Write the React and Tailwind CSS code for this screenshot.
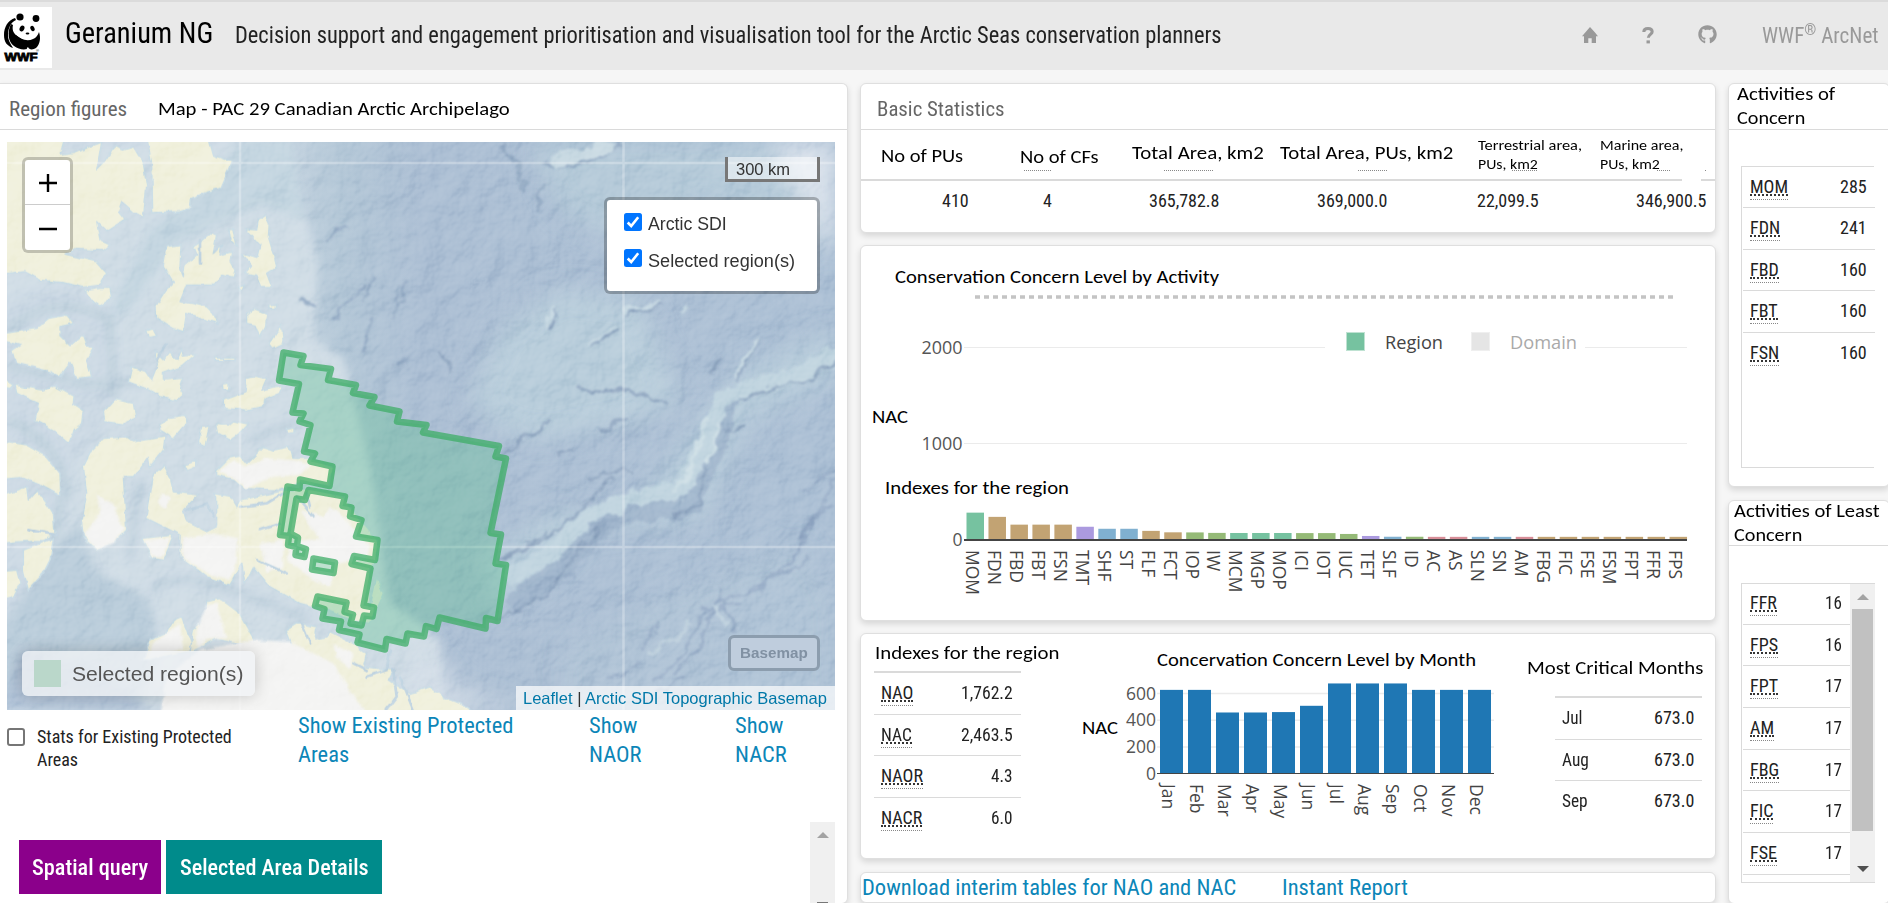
import React, { useLayoutEffect, useRef, useState } from 'react';
import { FaGithub } from 'react-icons/fa';

const CONDENSED = "font-['Roboto_Condensed','Roboto',sans-serif]";
const HUMANIST = "font-['Carlito','Lato',sans-serif]";
const ARIAL = "font-['Liberation_Sans',sans-serif]";

/* One line of text, squeezed horizontally to a given width. */
function Fit({ w, className = '', children }) {
  const ref = useRef(null);
  const [scale, setScale] = useState(1);
  useLayoutEffect(() => {
    setScale(w / ref.current.offsetWidth);
  }, [w]);
  return (
    <span className={'block shrink-0 ' + className} style={{ width: w }}>
      <span ref={ref} className="inline-block origin-left whitespace-nowrap align-top" style={{ transform: `scaleX(${scale})` }}>
        {children}
      </span>
    </span>
  );
}

function Card({ className = '', children }) {
  return (
    <section className={'shrink-0 rounded-md border border-[#dfdfdf] bg-white shadow-[0_3px_6px_rgba(0,0,0,0.13)] ' + className}>
      {children}
    </section>
  );
}

function Panda() {
  return (
    <svg viewBox="0 0 52 61" className="h-[61px] w-[52px]">
      <g fill="#000">
        <circle cx="20" cy="10" r="3.6" />
        <circle cx="36" cy="11.5" r="3.4" />
        <path d="M15 11C8 13 4 20 4 28c0 7 3 11 9 13-2-4-5-7-5-13 0-7 3-13 8-15z" />
        <path d="M11 17c-4 8-3 18 3 22 4 3 9 4 13 3l-2-8-8-5c-4-3-5-7-4-11z" />
        <ellipse cx="22" cy="21.5" rx="2.3" ry="3.1" transform="rotate(25 22 21.5)" />
        <ellipse cx="32.5" cy="21.5" rx="2" ry="2.8" transform="rotate(-25 32.5 21.5)" />
        <ellipse cx="27.500" cy="26.500" rx="1.9" ry="1.1" />
        <path d="M16 28c4 4 11 7 17 4 3-1 5-4 6-7 2 6 1 12-3 16-3 2-7 2-8-1-2 3-9 2-11-1-2-4-3-8-1-11z" />
      </g>
      <text x="4.500" y="54" fontSize="11" fontWeight="900" fontFamily="Liberation Sans, sans-serif" textLength="33" lengthAdjust="spacingAndGlyphs" stroke="#000" strokeWidth="0.800">WWF</text>
      <text x="36" y="45" fontSize="4" fontFamily="Liberation Sans, sans-serif">®</text>
    </svg>
  );
}

function Header() {
  return (
    <header className={'flex h-[70px] shrink-0 items-start border-t-2 border-[#dbdbdb] bg-[#e9e9e9] ' + CONDENSED}>
      <div className="mt-[5px] h-[61px] w-[52px] bg-white"><Panda /></div>
      <Fit w={148} className="ml-[13px] mt-[10px] text-[29px] leading-[42px] text-black">Geranium NG</Fit>
      <Fit w={987} className="ml-[22px] mt-[12px] text-[23.500px] leading-[42px] text-[#222]">Decision support and engagement prioritisation and visualisation tool for the Arctic Seas conservation planners</Fit>
      <svg viewBox="0 0 16 16" className="ml-[360px] mt-[25px] h-[16px] w-[16px] shrink-0 fill-[#999]">
        <path d="M8 0L0 9.2h2V16h4.3v-4.8h3.4V16H14V9.2h2L13 5.6z" />
      </svg>
      <svg viewBox="0 0 12 17" className="ml-[44px] mt-[25px] h-[17px] w-[12px] shrink-0 fill-none stroke-[#999]">
        <path d="M1.8 5C1.8 2.8 3.4 1.6 6 1.6s4.2 1.2 4.2 3.2c0 2.6-3.9 2.7-3.9 6" strokeWidth="3" />
        <path d="M4.5 14.9h3.4" strokeWidth="3" />
      </svg>
      <FaGithub className="ml-[44px] mt-[23px] size-[19px] shrink-0 text-[#999]" />
      <Fit w={117} className="ml-[45px] mt-[13px] text-[22px] leading-[42px] text-[#999]">WWF<sup className="-top-[8px] text-[16px]">®</sup> ArcNet</Fit>
    </header>
  );
}

const REGION =
  'M283.5 352.5L303.5 356L300.5 365L331 369L328 380L356 385L353 393L374.5 397L369.5 405.5L399.5 411.5L397 421.5L426.5 425L423 432.5L499 446L495.5 456.5L506 458.5L490.5 533L501 534.5L495.5 563.5L506 565L497.5 621L486 618L485.5 628.5L439.5 617.5L436.5 629L426 626L424 636.5L407.5 633.5L405.5 643.5L386.5 639L385 649.5L357.5 642.5L359.5 634.5L339 630L341 621.5L322.5 618.5L324.5 609L315 606L317.5 596.5L346.5 602.5L344.5 612L353 614.5L350.5 623.5L361.5 625.5L364 615.5L372.5 616.5L374 607.5L363.5 605.5L370.5 568.5L351.5 564L354 556L375 560L377.5 540L356 536.5L361.5 520L350 516.5L351.5 507.5L342.5 506L345 496.5L308.5 490L305 500L296.5 498.5L290.5 533.5L298 537.5L297 546L306 549L304.5 557L295.5 555L296.500 547L288 545L289 536L280 535L287.5 486.5L299.5 488.5L300 479.5L329.5 486L332.5 466.5L310.5 461.5L315 453.5L304 451.5L310.5 425L299.5 421.5L303.5 413.5L292.5 412.5L299 384L279 380.5ZM313.5 558.5L335 562.5L333.5 573L312 569.5Z';

/* Land outlines, in a grid three times finer than the map's pixels. */
const LAND = [
  'M0 20L195 20L180 75L220 70L305 36L290 122L312 100L345 50L370 60L400 50L430 100L440 170L430 262L400 245L365 215L355 245L375 270L320 305L290 275L300 330L330 345L310 362L230 358L195 372L290 395L320 430L300 465L250 472L190 458L120 450L75 425L0 432Z',
  'M440 20L625 20L640 75L695 95L660 175L610 190L575 205L570 235L540 245L458 248L455 100Z',
  'M255 482L300 474L330 475L335 505L300 528L275 512Z',
  'M500 350L543 343L540 410L550 440L555 405L590 375L580 350L610 330L635 308L650 315L640 370L665 345L660 375L695 365L690 395L705 420L700 445L665 435L640 465L560 465L540 515L575 520L620 530L640 550L655 580L620 570L560 550L550 605L520 595L470 565L468 530L500 480L520 460L490 410Z',
  'M735 295L770 300L775 268L795 255L808 280L805 320L820 370L830 410L800 430L815 470L785 470L770 435L735 430L755 405L725 370L770 385L780 345Z',
  'M740 550L765 537L800 550L797 590L780 625L765 585L740 580Z', 'M808 640L845 585L850 640L820 655Z',
  'M805 527L830 525L828 538L808 537Z', 'M685 297L697 295L712 350L695 335Z', 'M440 602L458 596L470 618L448 622Z', 'M712 468L730 463L722 482Z', 'M645 684L705 683L705 691L648 691Z', 'M670 765L688 762L685 782L672 780Z',
  'M0 612L110 595L145 565L200 555L222 580L180 590L180 620L210 650L250 615L262 645L280 655L260 690L275 740L230 745L210 700L180 740L150 725L100 712L50 700L38 660L60 645L0 630Z',
  'M0 740L40 765L30 775L0 770Z',
  'M45 765L130 780L165 768L222 800L220 820L250 840L245 880L222 900L210 942L160 900L105 870L115 820L50 790Z',
  'M465 665L490 690L510 665L530 690L545 655L550 675L590 670L545 710L490 730L490 750L550 745L540 780L550 795L530 812L480 800L450 780L385 755L395 710L440 725L455 748L470 710Z',
  'M670 810L735 785L740 745L765 738L800 745L785 780L845 765L835 790L800 805L790 830L740 840L670 835Z',
  'M310 845L345 808L400 820L408 865L370 882L315 875Z', 'M478 885L510 862L555 855L558 880L520 925L480 900Z', 'M605 892L628 888L615 950L595 940Z',
  'M650 880L685 885L700 872L745 882L725 905L690 930L655 910Z', 'M858 896L885 890L885 905L865 907Z', 'M550 1005L590 992L590 1010L560 1022Z',
  'M0 930L80 945L140 980L180 1030L182 1098L120 1065L60 1040L0 1045Z',
  'M0 1100L80 1070L85 1110L110 1080L140 1120L160 1150L165 1210L130 1235L60 1235L0 1240Z',
  'M310 925L380 920L400 935L495 920L490 960L450 1010L445 980L400 1040L370 1040L380 1200L350 1230L290 1260L250 1220L245 1180L260 1090L250 1010L275 960Z',
  'M650 1020L690 980L720 975L740 1000L790 950L820 960L870 950L880 985L930 985L1000 1010L985 1065L900 1060L840 1080L730 1075L700 1050L650 1040Z',
  'M460 1035L490 1005L510 1040L520 1085L595 1095L550 1140L560 1175L620 1205L650 1190L650 1100L640 1090L690 1098L708 1130L720 1110L860 1080L930 1075L1030 1100L1080 1170L1130 1230L1130 1290L1110 1320L1110 1430L1130 1340L1150 1390L1110 1480L1050 1470L980 1440L900 1420L810 1370L760 1310L735 1360L725 1300L690 1365L620 1340L540 1280L540 1215L440 1165Z',
  'M425 1225L520 1215L490 1290L455 1285Z', 'M70 1260L160 1225L150 1290L130 1330L85 1380L70 1320Z', 'M0 1325L50 1320L60 1360L40 1400L0 1410Z',
  'M520 1470L545 1460L575 1540L570 1565L430 1590L450 1530L500 1510Z', 'M620 1415L660 1405L720 1450L765 1530L740 1545L650 1525L570 1570L580 1500L615 1470Z',
  'M855 1500L890 1478L950 1490L945 1530L975 1525L990 1505L1060 1540L1100 1570L1090 1610L1180 1620L1165 1650L1230 1690L1290 1670L1330 1700L1380 1720L1440 1760L1040 1760L880 1560Z',
];

const ICE = [
  'M290 1090L310 1110L340 1120L355 1170L375 1195L340 1240L290 1258L252 1215L300 1150Z',
  'M655 1025L700 990L735 1010L800 985L880 990L930 1005L900 1035L820 1040L740 1075L700 1045Z',
  'M480 1090L510 1095L500 1140L470 1120Z', 'M545 1225L640 1210L715 1225L710 1300L690 1350L620 1330L545 1280Z', 'M430 1230L510 1222L485 1285L455 1280Z',
  'M900 1140L970 1160L990 1130L1040 1170L1110 1250L1100 1290L1010 1300L990 1370L940 1350L860 1290L880 1230L960 1230Z',
  'M780 1240L850 1230L850 1310L800 1330Z', 'M620 1425L650 1420L680 1520L620 1530L590 1560L590 1500Z', 'M500 1510L540 1480L550 1560L440 1590L455 1545Z',
  'M480 1760L500 1640L600 1560L760 1530L870 1535L1000 1600L1060 1700L1110 1760Z', 'M1000 1540L1060 1570L1050 1620L1010 1580Z',
];

function TopoMap() {
  return (
    <svg viewBox="7 142 828 568" className="absolute inset-0 h-[568px] w-[828px]">
      <defs>
        <linearGradient id="sea" x1="0" x2="1" y1="0" y2="0">
          <stop offset="0" stopColor="#cbd9e5" /><stop offset="0.3" stopColor="#ccd9e4" /><stop offset="0.4" stopColor="#b2c6d6" /><stop offset="0.5" stopColor="#abbed3" /><stop offset="1" stopColor="#abbfd4" />
        </linearGradient>
        <filter id="b1" x="-20%" y="-20%" width="140%" height="140%"><feGaussianBlur stdDeviation="2.500" /></filter>
        <filter id="b4" x="-30%" y="-30%" width="160%" height="160%"><feGaussianBlur stdDeviation="4" /></filter>
        <filter id="b12" x="-50%" y="-50%" width="200%" height="200%"><feGaussianBlur stdDeviation="12" /></filter>
        <filter id="coast" x="-2%" y="-2%" width="104%" height="104%" colorInterpolationFilters="sRGB">
          <feTurbulence type="fractalNoise" baseFrequency="0.035" numOctaves="2" seed="4" />
          <feDisplacementMap in="SourceGraphic" scale="14" xChannelSelector="R" yChannelSelector="G" />
        </filter>
        <filter id="rough" x="-5%" y="-5%" width="110%" height="110%" colorInterpolationFilters="sRGB">
          <feTurbulence type="fractalNoise" baseFrequency="0.07" numOctaves="3" seed="8" />
          <feDisplacementMap in="SourceGraphic" scale="15" xChannelSelector="R" yChannelSelector="G" />
          <feGaussianBlur stdDeviation="0.900" />
        </filter>
        <filter id="relief" x="0" y="0" width="100%" height="100%" colorInterpolationFilters="sRGB">
          <feTurbulence type="fractalNoise" baseFrequency="0.03" numOctaves="4" seed="11" />
          <feColorMatrix values="0 0 0 0 0  0 0 0 0 0  0 0 0 0 0  1 0 0 0 0" />
          <feDiffuseLighting surfaceScale="6" lightingColor="#ffffff" diffuseConstant="0.800"><feDistantLight azimuth="225" elevation="45" /></feDiffuseLighting>
        </filter>
      </defs>
      <rect x="7" y="142" width="828" height="568" fill="url(#sea)" />
      <g filter="url(#b4)">
        <path d="M0 142H280L300 200L318 260L315 340L345 360L372 480L388 600L440 640L440 710H0Z" fill="#cfdce5" />
        <path d="M240 142H290L305 220L260 205L175 245L130 310L105 320L150 230L200 190Z" fill="#c3d5e0" />
        <path d="M0 300L60 285L115 310L110 420L70 470L50 640L0 640Z" fill="#cad7e4" opacity=".7" />
        <path d="M7 330Q60 290 110 320L115 400M7 420Q60 440 70 500M140 480L130 560M7 365L90 385L150 380M60 480Q62 560 20 620M250 440L300 420M150 590Q180 570 230 590L310 620" stroke="#b9ccda" strokeWidth="8" fill="none" opacity=".75" />
        <path d="M0 630Q60 540 80 520L95 570L150 600L160 650L140 710H0Z" fill="#b9ccda" />
        <path d="M0 710L20 650L100 670L150 710Z" fill="#afc1d6" />
      </g>
      <g filter="url(#b12)" fill="#b7ccda">
        <path d="M500 330L560 290L640 300L680 400L640 420L540 440L500 430L470 400Z" />
        <path d="M530 142H835V250L760 230L700 200L640 250L560 210Z" opacity=".75" />
        <path d="M835 330L740 370L640 500L600 530L700 520L750 420L835 380Z" opacity=".9" />
        <path d="M480 560L560 510L600 520L540 580L500 610Z" />
        <path d="M560 650L650 600L800 540L835 600V710H560Z" opacity=".35" />
        <path d="M770 142H835V260L800 200Z" fill="#dbe3ec" />
        <path d="M420 640L460 690L530 710H400Z" fill="#d3dde7" />
      </g>
      <g filter="url(#rough)" fill="none" strokeLinecap="round">
        <path d="M505 148Q520 165 520 178M523 182L527 190M536 210L545 185M545 165L570 166L600 158L620 142" stroke="#92a9c2" strokeWidth="3.500" />
        <path d="M555 160L585 154L606 146" stroke="#c8d9e2" strokeWidth="14" />
        <path d="M728 400L712 455L690 505L620 512L592 532L562 568L520 600" stroke="#9cb1c9" strokeWidth="22" opacity=".8" />
        <path d="M835 355L800 375L740 390L722 402L704 445L682 490L630 498L590 516L555 550L515 575" stroke="#c0d4df" strokeWidth="17" />
        <path d="M705 420L694 460L676 492M720 425L706 465" stroke="#cddee5" strokeWidth="4" />
        <path d="M740 400L770 388L810 380L835 360M728 430L745 425M706 470L700 505L675 514M500 620L545 597L580 550L600 525M500 560L560 530L610 480M590 478L630 470M505 560L545 532" stroke="#8fa5bf" strokeWidth="2.600" />
        <path d="M735 380L760 340M708 375L722 360M625 315L660 305M592 345L618 330M550 330L556 310M575 390L640 392L665 405M440 352L448 370M600 430L630 420M560 455L572 448M505 452L540 430L550 420" stroke="#90a6c0" strokeWidth="3" />
        <path d="M735 375L758 338M625 311L658 302M590 342L615 328M547 330L554 308M680 311L686 310" stroke="#c6d8e2" strokeWidth="3.500" />
        <path d="M655 680L680 660L700 620L720 600L760 590L790 560L810 530L835 480M700 610L740 605M660 620L640 650M640 665L610 680M720 600L735 630M750 590L810 560M805 490L835 470M640 700L680 680M720 590L705 640L675 675M800 545L812 520L832 505" stroke="#94a9c4" strokeWidth="3" opacity=".85" />
        <path d="M715 605L725 625M650 655L690 625" stroke="#bed0dd" strokeWidth="4" />
        <path d="M325 240L345 225M330 320L350 300L365 285M365 300L372 278M390 320L400 285M402 300L408 283M365 350L370 320M395 365L410 358M300 300L315 305" stroke="#96acc5" strokeWidth="2.600" />
      </g>
      <g transform="translate(0 130) scale(0.33333)" filter="url(#coast)">
        <g fill="#f0f0dc" stroke="#c8dce6" strokeWidth="4" strokeLinejoin="round">
          {LAND.map((d, i) => <path key={i} d={d} />)}
        </g>
        <g fill="#f4f4f3" filter="url(#b1)">{ICE.map((d, i) => <path key={i} d={d} />)}</g>
        <path d="M560 1140L620 1120L640 1160M720 1130L800 1120L850 1090M890 1100L940 1160M920 1090L930 1130M780 1200L840 1180M1170 1560L1160 1620L1100 1640M1180 1620L1190 1700L1160 1740M1200 1640L1240 1740M1060 1600L1100 1620M85 1200L170 1215M500 640L470 690M600 330L600 400M770 1290L860 1330M905 1480L930 1540" stroke="#c2d5e2" strokeWidth="8" strokeLinecap="round" fill="none" />
      </g>
      <rect x="7" y="142" width="828" height="568" filter="url(#relief)" className="mix-blend-soft-light" opacity=".36" />
      <path d="M240 142V710M623.500 142V710M7 163H835M7 547H835" stroke="#fff" strokeOpacity=".28" strokeWidth="2.500" fill="none" />
      <path d={REGION} fill="#5fbf90" fillOpacity=".36" stroke="#3fae68" strokeOpacity=".76" strokeWidth="6.500" strokeLinejoin="round" fillRule="evenodd" />
    </svg>
  );
}

function Check() {
  return (
    <svg viewBox="0 0 18 18" className="size-[18px] shrink-0">
      <rect width="18" height="18" rx="2.500" fill="#0075ff" />
      <path d="M3.700 9.500L7.200 13L14.200 4.300" fill="none" stroke="#fff" strokeWidth="2.600" />
    </svg>
  );
}

function MapPanel() {
  return (
    <div className={'relative ml-[7px] mt-3 h-[568px] w-[828px] overflow-hidden ' + ARIAL}>
      <TopoMap />
      <div className="absolute left-[15px] top-[15px] h-[96px] w-[51px] rounded-md border-[3px] border-black/20 bg-white bg-clip-padding">
        <svg viewBox="0 0 45 90" className="h-[90px] w-[45px]">
          <path d="M14 23H32M23 14V32M14 69H32" stroke="#000" strokeWidth="2.400" />
          <path d="M0 44.500H45" stroke="#ccc" strokeWidth="1" />
        </svg>
      </div>
      <div className="absolute left-[718px] top-[15px] h-[25px] w-[95px] border-[3px] border-t-0 border-[#777] bg-white/50">
        <Fit w={54} className="ml-2 text-[16.5px] leading-[24px] text-[#333]">300 km</Fit>
      </div>
      <div className="absolute left-[597px] top-[55px] flex h-[97px] w-[216px] flex-col rounded-md border-[3px] border-black/25 bg-white bg-clip-padding pl-[17px] pt-[13px]">
        <div className="flex h-[36px] items-start gap-[6px]"><Check /><Fit w={79} className="text-[17.5px] leading-[22px] text-[#333]">Arctic SDI</Fit></div>
        <div className="flex h-[36px] items-start gap-[6px]"><Check /><Fit w={147} className="text-[17.5px] leading-[24px] text-[#333]">Selected region(s)</Fit></div>
      </div>
      <div className="absolute left-[15px] top-[509px] flex h-[45px] w-[233px] items-center gap-[11px] rounded-md bg-[rgba(240,243,245,0.8)] pl-3 shadow-[0_0_16px_rgba(0,0,0,0.2)]">
        <div className="size-[27px] bg-[#bad7ca]" />
        <Fit w={171} className="text-[21px] leading-[45px] text-[#555]">Selected region(s)</Fit>
      </div>
      <div className="absolute left-[721px] top-[493px] h-[36px] w-[92px] rounded-md border-[3px] border-[#8c9dae] bg-[#bfcddd]">
        <Fit w={68} className="ml-[9px] text-[15px] font-bold leading-[30px] text-[#8191a3]">Basemap</Fit>
      </div>
      <div className="absolute bottom-0 right-0 flex h-[24px] w-[319px] bg-white/70 pl-[7px] text-[16.5px] leading-[25px] text-[#0078a8]">
        <Fit w={304}>Leaflet <span className="text-[#333]">|</span> Arctic SDI Topographic Basemap</Fit>
      </div>
    </div>
  );
}

function LinkLines({ className, lines }) {
  return (
    <a className={'mt-[1px] text-[22.5px] leading-[29px] text-[#0c86b8] ' + className}>
      {lines.map(([t, w]) => <Fit key={t} w={w}>{t}</Fit>)}
    </a>
  );
}

function LeftColumn() {
  return (
    <Card className="h-[821px] w-[848px] rounded-l-none border-l-0">
      <div className="flex h-[46px] items-start border-b border-[#dadada]">
        <Fit w={118} className={'ml-[9px] mt-[5px] text-[21px] leading-[40px] text-[#666] ' + CONDENSED}>Region figures</Fit>
        <Fit w={352} className={'ml-[31px] mt-[5px] text-[19px] leading-[40px] text-black ' + HUMANIST}>Map - PAC 29 Canadian Arctic Archipelago</Fit>
      </div>
      <MapPanel />
      <div className={'flex h-[112px] items-start ' + CONDENSED}>
        <div className="ml-[7px] mt-[18px] size-[18px] rounded-[3px] border-2 border-[#767676] bg-white" />
        <div className="ml-[12px] mt-[15px] w-[261px] text-[18px] leading-[23px] text-[#222]">
          <Fit w={195}>Stats for Existing Protected</Fit>
          <Fit w={41}>Areas</Fit>
        </div>
        <LinkLines className="w-[291px]" lines={[['Show Existing Protected', 215], ['Areas', 51]]} />
        <LinkLines className="w-[146px]" lines={[['Show', 48], ['NAOR', 52]]} />
        <LinkLines className="w-[60px]" lines={[['Show', 48], ['NACR', 52]]} />
      </div>
      <div className={'flex h-[81px] text-[22.5px] font-medium leading-[54px] text-white ' + CONDENSED}>
        <div className="ml-[19px] mt-[18px] h-[54px] w-[142px] bg-[#8b008b] pl-[13px]"><Fit w={116}>Spatial query</Fit></div>
        <div className="ml-[5px] mt-[18px] h-[54px] w-[216px] bg-[#008b8b] pl-[14px]"><Fit w={189}>Selected Area Details</Fit></div>
        <div className="ml-auto mr-[12px] flex w-[25px] flex-col items-center justify-between bg-[#f0f0f0] pt-[10px]">
          <svg viewBox="0 0 12 6" className="h-[6px] w-[12px] fill-[#a3a3a3]"><path d="M0 6L6 0L12 6Z" /></svg>
          <div className="h-[1px] w-[11px] bg-[#777]" />
        </div>
      </div>
    </Card>
  );
}

function Dots({ className }) {
  return <div className={'h-0 shrink-0 border-t border-dotted border-[#888] ' + className} />;
}

function BasicStatistics() {
  return (
    <Card className="h-[150px]">
      <div className="h-[46px] border-b border-[#dadada]">
        <Fit w={128} className={'ml-[16px] pt-[5px] text-[21px] leading-[40px] text-[#666] ' + CONDENSED}>Basic Statistics</Fit>
      </div>
      <div className={'flex h-[40px] items-start text-[19px] leading-[24px] text-black ' + HUMANIST}>
        <Fit w={82} className="ml-[20px] mt-[14px]">No of PUs</Fit>
        <Fit w={79} className="ml-[57px] mt-[15px]">No of CFs</Fit>
        <Fit w={132} className="ml-[33px] mt-[11px]">Total Area, km2</Fit>
        <Fit w={173} className="ml-[16px] mt-[11px]">Total Area, PUs, km2</Fit>
        <div className="ml-[25px] mt-[6px] w-[104px] text-[14.5px] leading-[19px]"><Fit w={104}>Terrestrial area,</Fit><Fit w={60}>PUs, km2</Fit></div>
        <div className="ml-[18px] mt-[6px] w-[83px] text-[14.5px] leading-[19px]"><Fit w={83}>Marine area,</Fit><Fit w={60}>PUs, km2</Fit></div>
      </div>
      <div className="flex h-[9px]">
        <Dots className="ml-[163px] w-[27px]" /><Dots className="ml-[113px] w-[49px]" /><Dots className="ml-[145px] w-[29px]" />
        <Dots className="ml-[125px] w-[25px]" /><Dots className="ml-[120px] w-[13px]" /><Dots className="ml-[35px] w-[1px]" />
      </div>
      <div className="flex h-[2px] gap-[19px]"><div className="w-[821px] bg-[#dadada]" /><div className="flex-1 bg-[#dadada]" /></div>
      <div className={'flex pt-[4px] text-[18px] leading-[32px] text-[#222] ' + CONDENSED}>
        <Fit w={27} className="ml-[81px]">410</Fit>
        <Fit w={9} className="ml-[74px]">4</Fit>
        <Fit w={71} className="ml-[97px]">365,782.8</Fit>
        <Fit w={71} className="ml-[97px]">369,000.0</Fit>
        <Fit w={62} className="ml-[89px]">22,099.5</Fit>
        <Fit w={71} className="ml-[97px]">346,900.5</Fit>
      </div>
    </Card>
  );
}

const G = '#76c2a0', T = '#c2a373', P = '#ab9adf', B = '#80b0d0', L = '#95ba77', R = '#d88e98';
const ACTIVITIES = [
  ['MOM', 285, G], ['FDN', 241, T], ['FBD', 160, T], ['FBT', 160, T], ['FSN', 160, T], ['TMT', 138, P], ['SHF', 117, B], ['ST', 117, B], ['FLF', 95, T],
  ['FCT', 80, T], ['IOP', 79, L], ['IW', 74, L], ['MCM', 73, G], ['MGP', 73, G], ['MOP', 73, G], ['ICI', 72, L], ['IOT', 72, L], ['IUC', 63, L], ['TET', 42, P],
  ['SLF', 34, B], ['ID', 34, L], ['AC', 33, R], ['AS', 33, R], ['SLN', 33, B], ['SN', 33, B], ['AM', 33, R], ['FBG', 33, T], ['FIC', 33, T], ['FSE', 33, T],
  ['FSM', 33, T], ['FPT', 33, T], ['FFR', 33, T], ['FPS', 33, T],
];
const MONTHS = [['Jan', 625], ['Feb', 625], ['Mar', 456], ['Apr', 456], ['May', 459], ['Jun', 506], ['Jul', 673], ['Aug', 673], ['Sep', 673], ['Oct', 625], ['Nov', 625], ['Dec', 625]];

const OPEN = 'Open Sans, sans-serif';
const CAL = 'Carlito, Lato, sans-serif';

function Label({ x, y, w, children }) {
  return <text x={x} y={y} fontSize="19" fontFamily={CAL} fill="#000" textLength={w} lengthAdjust="spacingAndGlyphs">{children}</text>;
}

function ActivityChart() {
  return (
    <Card className="mt-[12px] h-[376px]">
      <svg viewBox="861 246 854 374" className="h-[374px] w-[854px]">
        <Label x={895} y={283} w={324}>Conservation Concern Level by Activity</Label>
        <path d="M975 297H1673" stroke="#c4c4c4" strokeWidth="3.500" strokeDasharray="5 4" />
        <path d="M964 347.500H1325M1585 347.500H1687M964 443.500H1687" stroke="#ebebeb" />
        <g fontFamily={OPEN} fontSize="17.500" fill="#555" textAnchor="end">
          <text x="962.500" y="354" textLength="41" lengthAdjust="spacingAndGlyphs">2000</text><text x="962.500" y="450" textLength="41" lengthAdjust="spacingAndGlyphs">1000</text><text x="962.500" y="546">0</text>
        </g>
        <rect x="1346.500" y="332.500" width="18" height="18" fill={G} stroke="#bfe2d2" />
        <rect x="1471.500" y="332.500" width="18" height="18" fill="#e5e5e5" stroke="#efefef" />
        <text x="1385" y="349" fontFamily={OPEN} fontSize="17.500" fill="#444" textLength="58" lengthAdjust="spacingAndGlyphs">Region</text>
        <text x="1510" y="349" fontFamily={OPEN} fontSize="17.500" fill="#a9a9a9" textLength="67" lengthAdjust="spacingAndGlyphs">Domain</text>
        <Label x={872} y={423} w={36}>NAC</Label>
        <Label x={885} y={494} w={184}>Indexes for the region</Label>
        {ACTIVITIES.map(([name, v, c], i) => {
          const x = 966 + i * 21.970;
          return (
            <g key={name}>
              <rect x={x + 0.5} y={540 - v * 0.096} width="17.500" height={v * 0.096} fill={c} />
              <text transform={`translate(${x - 0.2} 550) rotate(90)`} fontFamily={OPEN} fontSize="17.500" fill="#444">{name}</text>
            </g>
          );
        })}
        <path d="M964 540H1687" stroke="#444" strokeWidth="2" />
      </svg>
    </Card>
  );
}

function Code({ w, children }) {
  return (
    <span className="flex flex-col">
      <Fit w={w} className="h-[20px] leading-[26px]">{children}</Fit>
      <span className="z-10 border-t-2 border-dotted border-[#333]" style={{ width: w }} />
      <span className="mt-[3px] border-t border-dotted border-[#888]" style={{ width: w }} />
    </span>
  );
}

function Table({ rows, className, code, lastLine, w = 27 }) {
  return (
    <div className={'text-[18px] text-[#222] ' + CONDENSED + ' ' + className}>
      {rows.map(([name, v, nw, vw], i) => (
        <div key={name} className={'flex h-[41.67px] items-start justify-between pl-[7px] pr-2 pt-[7px] ' + (i < rows.length - 1 || lastLine ? 'border-b border-[#dadada]' : '')}>
          {code ? <Code w={nw}>{name}</Code> : <Fit w={nw} className="leading-[26px]">{name}</Fit>}
          <Fit w={vw || w} className="leading-[26px]">{v}</Fit>
        </div>
      ))}
    </div>
  );
}

function MonthChart() {
  return (
    <svg viewBox="1058 634 470 224" className="h-[224px] w-[470px] shrink-0">
      <Label x={1157} y={666} w={319}>Concervation Concern Level by Month</Label>
      <Label x={1082} y={734} w={36}>NAC</Label>
      <path d="M1157 693.500H1494M1157 720.200H1494M1157 747H1494" stroke="#ebebeb" strokeWidth="1.500" />
      <g fontFamily={OPEN} fontSize="17.500" fill="#555" textAnchor="end">
        <text x="1156" y="700">600</text><text x="1156" y="726">400</text><text x="1156" y="753">200</text><text x="1156" y="780">0</text>
      </g>
      {MONTHS.map(([m, v], i) => (
        <g key={m}>
          <rect x={1160 + i * 28} y={773.5 - v * 0.1338} width="23" height={v * 0.1338} fill="#1f77b4" />
          <text transform={`translate(${1162 + i * 28} 784) rotate(90)`} fontFamily={OPEN} fontSize="17.500" fill="#444">{m}</text>
        </g>
      ))}
      <path d="M1157 773.500H1494" stroke="#444" strokeWidth="1.200" />
    </svg>
  );
}

function MonthsCard() {
  return (
    <Card className="mt-[12px] flex h-[226px]">
      <div className="w-[197px] shrink-0 pl-[13px]">
        <Fit w={184} className={'ml-[1px] mt-[6px] text-[19px] leading-[26px] text-black ' + HUMANIST}>Indexes for the region</Fit>
        <Table code className="mt-[5px] w-[147px] border-t-2 border-[#dadada]" rows={[['NAO', '1,762.2', 32, 52], ['NAC', '2,463.5', 31, 52], ['NAOR', '4.3', 42, 22], ['NACR', '6.0', 41, 22]]} />
      </div>
      <MonthChart />
      <div className="shrink-0">
        <Fit w={176} className={'-ml-[1px] mt-[21px] text-[19px] leading-[26px] text-black ' + HUMANIST}>Most Critical Months</Fit>
        <Table className="ml-[27px] mt-[15px] w-[147px] border-t-2 border-[#dadada]" w={40} rows={[['Jul', '673.0', 21], ['Aug', '673.0', 27], ['Sep', '673.0', 26]]} />
      </div>
    </Card>
  );
}

function RightColumn() {
  const title = 'flex flex-col text-[19px] leading-[24px] text-black ' + HUMANIST;
  return (
    <div className="w-[160px] shrink-0">
      <Card className="h-[404px] w-[162px]">
        <div className={'h-[46px] border-b border-[#dadada] pl-2 ' + title}>
          <Fit w={98} className="-mt-[2px]">Activities of</Fit>
          <Fit w={68}>Concern</Fit>
        </div>
        <div className="ml-3 mt-[36px] h-[302px] w-[133px] border-y border-l border-[#dadada] pl-[1px]">
          <Table code className="-mt-[0.500px] w-[132px]" rows={[['MOM', '285', 38], ['FDN', '241', 30], ['FBD', '160', 29], ['FBT', '160', 28], ['FSN', '160', 29]]} />
        </div>
      </Card>
      <Card className="mt-[13px] h-[404px] w-[162px]">
        <div className={'h-[45px] border-b border-[#dadada] pl-[5px] ' + title}>
          <Fit w={146} className="-mt-[2px]">Activities of Least</Fit>
          <Fit w={68}>Concern</Fit>
        </div>
        <div className="ml-3 mt-[37px] flex h-[300px] w-[134px] overflow-hidden border-y border-l border-[#dadada] pl-[1px]">
          <Table code lastLine w={17} className="-mt-[1px] w-[107px]" rows={[['FFR', '16', 27], ['FPS', '16', 28], ['FPT', '17', 28], ['AM', '17', 24], ['FBG', '17', 29], ['FIC', '17', 23], ['FSE', '17', 27]]} />
          <div className="flex w-[25px] flex-col items-center bg-[#f0f0f0]">
            <svg viewBox="0 0 12 6" className="mt-[10px] h-[6px] w-[12px] fill-[#a3a3a3]"><path d="M0 6L6 0L12 6Z" /></svg>
            <div className="mt-[9px] h-[222px] w-[21px] bg-[#c1c1c1]" />
            <svg viewBox="0 0 12 6" className="mt-[35px] h-[6px] w-[12px] fill-[#505050]"><path d="M0 0L6 6L12 0Z" /></svg>
          </div>
        </div>
      </Card>
    </div>
  );
}

export default function App() {
  return (
    <div className="flex h-[903px] w-[1888px] flex-col overflow-hidden bg-[#f6f6f6]">
      <Header />
      <main className="flex pt-[13px]">
        <LeftColumn />
        <div className="ml-[12px] w-[856px] shrink-0">
          <BasicStatistics />
          <ActivityChart />
          <MonthsCard />
          <Card className={'mt-[13px] flex h-[31px] text-[22.5px] leading-[29px] text-[#0c86b8] ' + CONDENSED}>
            <Fit w={374} className="ml-[1px]">Download interim tables for NAO and NAC</Fit>
            <Fit w={126} className="ml-[46px]">Instant Report</Fit>
          </Card>
        </div>
        <div className="ml-[12px]"><RightColumn /></div>
      </main>
    </div>
  );
}
